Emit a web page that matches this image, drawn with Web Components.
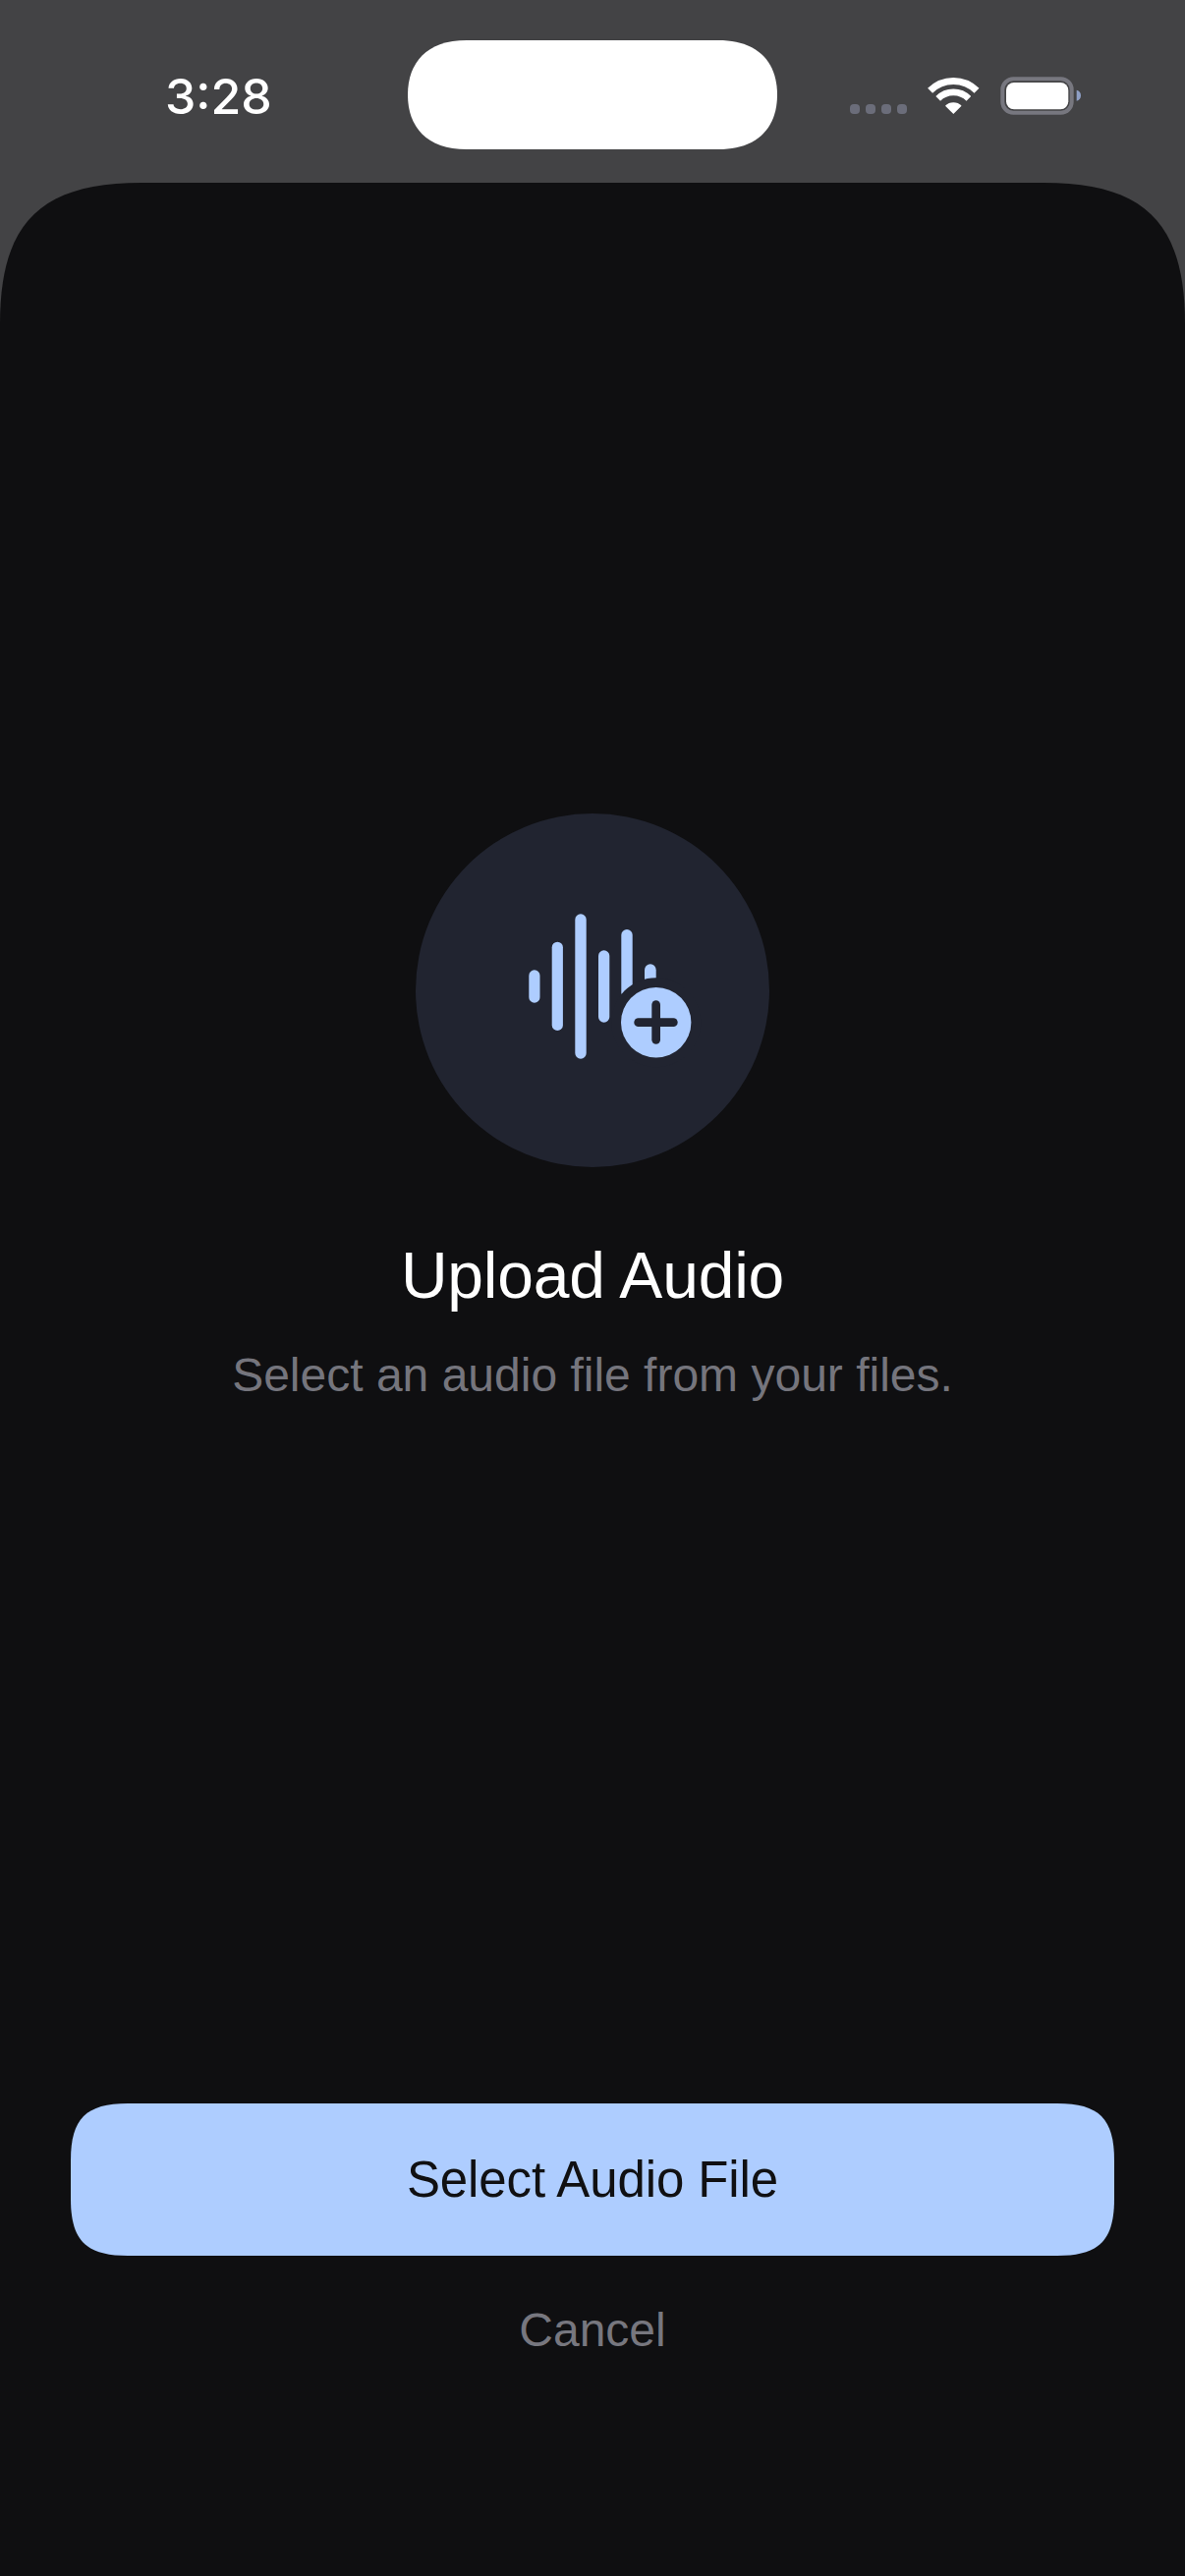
<!doctype html>
<html lang="en"><head><meta charset="utf-8"><title>Upload Audio</title>
<style>
html,body{margin:0;padding:0;background:#434345;width:1206px;height:2622px;overflow:hidden}
body{display:flex;flex-direction:column;font-family:"Liberation Sans",Arial,sans-serif}
</style></head>
<body>
<status-bar></status-bar>
<upload-sheet>
  <audio-badge slot="badge"></audio-badge>
  <span slot="title">Upload Audio</span>
  <span slot="subtitle">Select an audio file from your files.</span>
  <primary-button slot="primary">Select Audio File</primary-button>
  <text-button slot="secondary">Cancel</text-button>
</upload-sheet>
<script>
// squircle-style corners: e = corner extent, a = bezier pull
function smooth(w,h,e,a,bottom){
  let p=`M${e} 0L${w-e} 0C${w-a} 0 ${w} ${a} ${w} ${e}`;
  if(bottom){
    p+=`L${w} ${h-e}C${w} ${h-a} ${w-a} ${h} ${w-e} ${h}L${e} ${h}C${a} ${h} 0 ${h-a} 0 ${h-e}`;
  } else {
    p+=`L${w} ${h}L0 ${h}`;
  }
  p+=`L0 ${e}C0 ${a} ${a} 0 ${e} 0Z`;
  return `path("${p}")`;
}
function define(name,html,init){
  customElements.define(name,class extends HTMLElement{
    constructor(){super();this.attachShadow({mode:'open'}).innerHTML=html;}
    connectedCallback(){init&&init(this);}
  });
}
define('status-bar',`<style>
:host{display:flex;flex:none;height:186px;background:#434345;color:#fff}
.left{width:415px;box-sizing:border-box;padding:68px 0 0 168px;font:500 50px/60px Inter,"Liberation Sans",sans-serif}
.island{width:376px;height:111px;margin-top:41px;background:#fff;clip-path:path("M60 0H316C357 0 376 23 376 55.5C376 88 357 111 316 111H60C19 111 0 88 0 55.5C0 23 19 0 60 0Z")}
status-icons{margin:70px 0 0 69px}
</style><div class="left">3:28</div><div class="island"></div><status-icons></status-icons>`);
define('status-icons',`<style>:host{display:block;width:245px;height:55px}svg{display:block}</style>
<svg width="245" height="55" viewBox="860 70 245 55" fill="none">
<g fill="#6b6d7a"><rect x="865" y="106" width="10" height="10" rx="4"/><rect x="881" y="106" width="10" height="10" rx="4"/><rect x="897" y="106" width="10" height="10" rx="4"/><rect x="913" y="106" width="10" height="10" rx="4"/></g>
<path d="M946.6 92.3A33.5 33.5 0 0 1 994 92.3" stroke="#fff" stroke-width="7"/>
<path d="M954.7 100.4A22 22 0 0 1 985.9 100.4" stroke="#fff" stroke-width="6.6"/>
<path d="M970.3 116L962 107.7A11.7 11.7 0 0 1 978.6 107.7Z" fill="#fff"/>
<rect x="1020.3" y="80.3" width="70.4" height="34.4" rx="11" stroke="#77777f" stroke-width="4"/>
<rect x="1024" y="84" width="63.3" height="27.3" rx="8" fill="#fff"/>
<path d="M1095.7 91.7C1098.5 92.5 1100 94.5 1100 97.2C1100 99.9 1098.5 101.9 1095.7 102.7Z" fill="#8e9fc6"/>
</svg>`);
define('upload-sheet',`<style>
:host{display:flex;flex-direction:column;align-items:center;flex:none;width:1206px;height:2436px;box-sizing:border-box;padding-top:642px;background:#0f0f11}
.t{font-size:66px;line-height:80px;letter-spacing:-.2px;color:#fff;margin-top:70px}
.s{font-size:48px;line-height:58px;color:#75757d;margin-top:33px}
.sp{flex:1}
.b{padding-bottom:221px;display:flex;flex-direction:column;align-items:center;gap:47px}
</style><slot name="badge"></slot><div class="t"><slot name="title"></slot></div><div class="s"><slot name="subtitle"></slot></div><div class="sp"></div><div class="b"><slot name="primary"></slot><slot name="secondary"></slot></div>`,
el=>{el.style.clipPath=smooth(1206,2436,144,41,false);});
define('audio-badge',`<style>:host{display:block;width:360px;height:360px;border-radius:50%;background:#212430}svg{display:block}</style>
<svg width="360" height="360" viewBox="423 828 360 360">
<g fill="#aecdff">
<rect x="538.3" y="987.3" width="11.2" height="33.4" rx="5.6"/>
<rect x="561.7" y="958.7" width="11.2" height="90.3" rx="5.6"/>
<rect x="585.3" y="930.3" width="11.4" height="147.4" rx="5.7"/>
<rect x="609" y="967.3" width="11.3" height="73.4" rx="5.65"/>
<rect x="632.3" y="946" width="11.4" height="70" rx="5.7"/>
<rect x="656" y="981.3" width="11.7" height="30" rx="5.85"/>
</g>
<circle cx="667.7" cy="1040.7" r="45.5" fill="#212430"/>
<circle cx="667.7" cy="1040.7" r="35.7" fill="#aecdff"/>
<rect x="645.3" y="1036.3" width="44.4" height="8.7" rx="4.35" fill="#212430"/>
<rect x="663.3" y="1018.3" width="8.7" height="44.4" rx="4.35" fill="#212430"/>
</svg>`);
define('primary-button',`<style>:host{display:flex;align-items:center;justify-content:center;width:1062px;height:155px;background:#aecdff;color:#101012;font-size:51px;line-height:62px;letter-spacing:-.1px}</style><slot></slot>`,
el=>{el.style.clipPath=smooth(1062,155,58,15.5,true);});
define('text-button',`<style>:host{display:block;color:#77777f;font-size:48px;line-height:58px}</style><slot></slot>`);
</script>
</body></html>
